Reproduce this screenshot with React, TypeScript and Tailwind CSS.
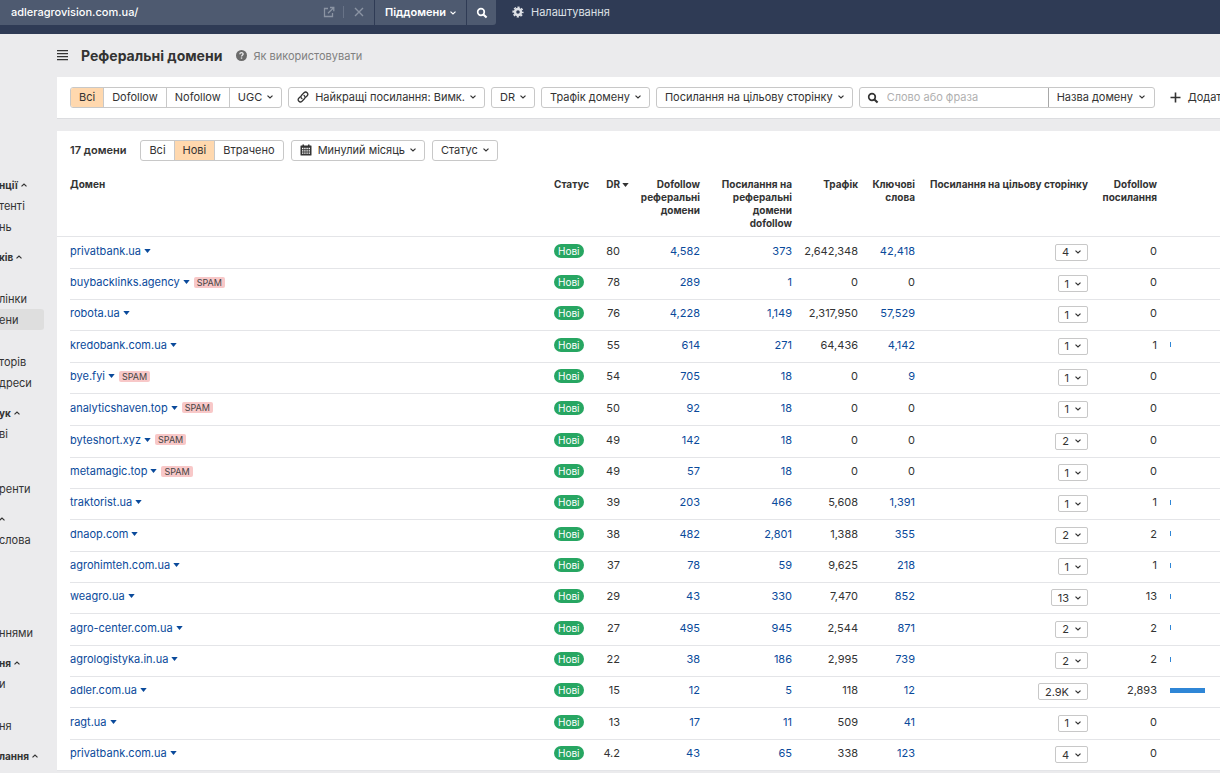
import type { ReactNode } from 'react';

const NAV: { label?: string; head?: boolean; active?: boolean; space?: string }[] = [
  { label: 'нції', head: true },
  { label: 'тенті' },
  { label: 'нь' },
  { space: 'h-[9px]' },
  { label: 'ків', head: true },
  { space: 'h-[21px]' },
  { label: 'лінки' },
  { label: 'ени', active: true },
  { space: 'h-[21px]' },
  { label: 'торів' },
  { label: 'дреси' },
  { space: 'h-[9px]' },
  { label: 'ук', head: true },
  { label: 'ві' },
  { space: 'h-[34px]' },
  { label: 'ренти' },
  { space: 'h-[9px]' },
  { label: '', head: true },
  { label: 'слова' },
  { space: 'h-[72px]' },
  { label: 'ннями' },
  { space: 'h-[9px]' },
  { label: 'ня', head: true },
  { label: 'и' },
  { space: 'h-[21px]' },
  { label: 'ня' },
  { space: 'h-[9px]' },
  { label: 'лання', head: true },
];

type Row = {
  domain: string;
  spam?: boolean;
  dr: string;
  ref: string;
  out: string;
  traffic: string;
  keywords: string;
  links: string;
  dofollow: string;
};

const ROWS: Row[] = [
  { domain: 'privatbank.ua', dr: '80', ref: '4,582', out: '373', traffic: '2,642,348', keywords: '42,418', links: '4', dofollow: '0' },
  { domain: 'buybacklinks.agency', spam: true, dr: '78', ref: '289', out: '1', traffic: '0', keywords: '0', links: '1', dofollow: '0' },
  { domain: 'robota.ua', dr: '76', ref: '4,228', out: '1,149', traffic: '2,317,950', keywords: '57,529', links: '1', dofollow: '0' },
  { domain: 'kredobank.com.ua', dr: '55', ref: '614', out: '271', traffic: '64,436', keywords: '4,142', links: '1', dofollow: '1' },
  { domain: 'bye.fyi', spam: true, dr: '54', ref: '705', out: '18', traffic: '0', keywords: '9', links: '1', dofollow: '0' },
  { domain: 'analyticshaven.top', spam: true, dr: '50', ref: '92', out: '18', traffic: '0', keywords: '0', links: '1', dofollow: '0' },
  { domain: 'byteshort.xyz', spam: true, dr: '49', ref: '142', out: '18', traffic: '0', keywords: '0', links: '2', dofollow: '0' },
  { domain: 'metamagic.top', spam: true, dr: '49', ref: '57', out: '18', traffic: '0', keywords: '0', links: '1', dofollow: '0' },
  { domain: 'traktorist.ua', dr: '39', ref: '203', out: '466', traffic: '5,608', keywords: '1,391', links: '1', dofollow: '1' },
  { domain: 'dnaop.com', dr: '38', ref: '482', out: '2,801', traffic: '1,388', keywords: '355', links: '2', dofollow: '2' },
  { domain: 'agrohimteh.com.ua', dr: '37', ref: '78', out: '59', traffic: '9,625', keywords: '218', links: '1', dofollow: '1' },
  { domain: 'weagro.ua', dr: '29', ref: '43', out: '330', traffic: '7,470', keywords: '852', links: '13', dofollow: '13' },
  { domain: 'agro-center.com.ua', dr: '27', ref: '495', out: '945', traffic: '2,544', keywords: '871', links: '2', dofollow: '2' },
  { domain: 'agrologistyka.in.ua', dr: '22', ref: '38', out: '186', traffic: '2,995', keywords: '739', links: '2', dofollow: '2' },
  { domain: 'adler.com.ua', dr: '15', ref: '12', out: '5', traffic: '118', keywords: '12', links: '2.9K', dofollow: '2,893' },
  { domain: 'ragt.ua', dr: '13', ref: '17', out: '11', traffic: '509', keywords: '41', links: '1', dofollow: '0' },
  { domain: 'privatbank.com.ua', dr: '4.2', ref: '43', out: '65', traffic: '338', keywords: '123', links: '4', dofollow: '0' },
];

function Chevron({ up = false, className = '' }: { up?: boolean; className?: string }) {
  return (
    <svg viewBox="0 0 6 4" className={`h-1 w-[6px] shrink-0 ${className}`} fill="none" stroke="currentColor" strokeWidth="1.2" aria-hidden="true">
      <path d={up ? 'M.5 3.4 3 1l2.5 2.4' : 'M.5.6 3 3 5.5.6'} />
    </svg>
  );
}

function Caret() {
  return (
    <svg viewBox="0 0 7 4" className="h-1 w-[7px] shrink-0" fill="currentColor" aria-hidden="true">
      <path d="M.3 0h6.4L3.5 4z" />
    </svg>
  );
}

function SearchIcon() {
  return (
    <svg viewBox="0 0 12 12" className="size-3 shrink-0" fill="none" stroke="currentColor" strokeWidth="1.7" aria-hidden="true">
      <circle cx="5" cy="5" r="3.3" />
      <path d="m7.4 7.4 3.2 3.2" strokeWidth="2.1" />
    </svg>
  );
}

function Menu({ children }: { children: ReactNode }) {
  return (
    <button type="button" aria-haspopup="menu" className="flex h-[21px] shrink-0 items-center gap-[5px] whitespace-nowrap rounded-[3px] border border-[#c8c8c8] bg-white px-2 pb-px">
      {children}
      <Chevron />
    </button>
  );
}

function Segments({ items, selected, menuLast = false, label }: { items: string[]; selected: string; menuLast?: boolean; label: string }) {
  return (
    <div role="group" aria-label={label} className="flex h-[21px] shrink-0 rounded-[3px] border border-[#c8c8c8]">
      {items.map((item, i) => (
        <button
          key={item}
          type="button"
          aria-pressed={item === selected}
          className={`flex items-center gap-[5px] whitespace-nowrap px-2 pb-px ${i > 0 ? 'border-l border-[#c8c8c8]' : 'rounded-l-[2px]'} ${item === selected ? 'bg-[#ffd8ae]' : ''}`}
        >
          {item}
          {menuLast && i === items.length - 1 && <Chevron />}
        </button>
      ))}
    </div>
  );
}

function Amount({ value }: { value: string }) {
  return value === '0' ? <span>{value}</span> : <a href="#" className="text-[#0a4a9b]">{value}</a>;
}

export default function App() {
  return (
    <div className="min-h-screen overflow-hidden bg-[#ebebed] font-['Inter','Noto_Sans',sans-serif] text-[11px] leading-4 text-[#333]">
      <header className="flex h-[34px] items-start bg-[#2f3b55] text-white">
        <form className="flex h-[25px] w-[496px] gap-px" onSubmit={(e) => e.preventDefault()}>
          <div className="flex min-w-0 flex-1 items-center bg-[#4e5a70] pb-px text-[#8b94a3]">
            <input aria-label="Домен" defaultValue="adleragrovision.com.ua/" className="min-w-0 flex-1 bg-transparent pl-[11px] font-medium text-white outline-none" />
            <button type="button" aria-label="Відкрити сайт" className="px-2">
              <svg viewBox="0 0 12 12" className="size-3" fill="none" stroke="currentColor" strokeWidth="1.3" aria-hidden="true">
                <path d="M5 2.5H1.5v8h8V7M7 1.5h3.8v3.8M10.6 1.7 5 7.2" />
              </svg>
            </button>
            <span className="h-3 w-px bg-[#687387]" />
            <button type="button" aria-label="Очистити" className="px-[10px]">
              <svg viewBox="0 0 10 10" className="size-[10px]" fill="none" stroke="currentColor" strokeWidth="1.4" aria-hidden="true">
                <path d="m1 1 8 8M9 1 1 9" />
              </svg>
            </button>
          </div>
          <div className="relative flex bg-[#4e5a70]">
            <select aria-label="Режим" className="appearance-none bg-transparent pb-px pl-[10px] pr-5 font-semibold outline-none">
              <option>Піддомени</option>
            </select>
            <Chevron className="pointer-events-none absolute right-[10px] top-[11px]" />
          </div>
          <button type="submit" aria-label="Пошук" className="flex w-[29px] items-center justify-center rounded-br-[3px] bg-[#4e5a70]">
            <SearchIcon />
          </button>
        </form>
        <button type="button" className="ml-4 flex h-[25px] items-center gap-[7px] pb-px text-[#dde0e6]">
          <svg viewBox="0 0 12 12" className="size-3" fill="none" stroke="currentColor" aria-hidden="true">
            <circle cx="6" cy="6" r="3" strokeWidth="2.4" />
            <circle cx="6" cy="6" r="4.8" strokeWidth="1.6" strokeDasharray="2.2 1.57" strokeDashoffset="1.1" />
          </svg>
          Налаштування
        </button>
      </header>

      <div className="flex">
        <nav aria-label="Розділи" className="mr-[13px] w-[44px] shrink-0 overflow-hidden pt-[140px]">
          {NAV.map((item, i) =>
            item.space ? (
              <div key={i} className={item.space} />
            ) : item.head ? (
              <button key={i} type="button" aria-label={item.label || 'Розділ'} className="-ml-px flex h-[21px] items-center gap-[3px] text-[10px] font-bold">
                {item.label}
                <Chevron up />
              </button>
            ) : (
              <a key={i} href="#" className={`flex h-[21px] items-center rounded-r-[3px] ${item.active ? 'bg-[#dedede]' : ''}`}>
                <span className="-ml-px">{item.label}</span>
              </a>
            ),
          )}
        </nav>

        <main className="min-w-0 flex-1">
          <div className="flex h-[43px] items-center">
            <button type="button" aria-label="Меню">
              <svg viewBox="0 0 11 11" className="size-[11px]" fill="currentColor" aria-hidden="true">
                <path d="M0 0h11v1.3H0zM0 3h11v1.3H0zM0 6h11v1.3H0zM0 9h11v1.3H0z" />
              </svg>
            </button>
            <h1 className="ml-[13px] text-[14px] font-bold">Реферальні домени</h1>
            <a href="#" className="ml-[14px] flex items-center gap-[6px] text-[#808080]">
              <svg viewBox="0 0 11 11" className="size-[11px]" aria-hidden="true">
                <circle cx="5.5" cy="5.5" r="5.5" fill="#6b6b6b" />
                <path d="M3.8 4.3C3.9 2.1 7.2 2.2 7.1 4.1 7 5.2 5.5 5.2 5.5 6.5" fill="none" stroke="#ebebed" strokeWidth="1.3" />
                <path d="M4.8 7.4h1.4v1.3H4.8z" fill="#ebebed" />
              </svg>
              Як використовувати
            </a>
          </div>

          <section aria-label="Фільтри" className="flex items-center gap-[6px] border-b border-[#dcdde0] bg-white pb-[10px] pl-[13px] pt-[10px]">
            <Segments label="Тип посилань" items={['Всі', 'Dofollow', 'Nofollow', 'UGC']} selected="Всі" menuLast />
            <Menu>
              <svg viewBox="0 0 12 12" className="size-3 shrink-0" fill="none" stroke="currentColor" strokeWidth="1.3" strokeLinecap="round" aria-hidden="true">
                <path d="M4.9 7.6C3.7 6.7 3.6 5.2 4.6 4.2L7 1.8c2.2-2 5 .8 3.2 3L8.6 6.4" />
                <path d="M7.1 4.4c1.2.9 1.3 2.4.3 3.4L5 10.2c-2.2 2-5-.8-3.2-3l1.6-1.6" />
              </svg>
              <span className="ml-px">Найкращі посилання: Вимк.</span>
            </Menu>
            <Menu>DR</Menu>
            <Menu>Трафік домену</Menu>
            <Menu>Посилання на цільову сторінку</Menu>
            <div className="flex h-[21px] shrink-0 rounded-[3px] border border-[#c8c8c8]">
              <label className="flex w-[189px] items-center gap-2 border-r border-[#a8a8a8] pl-[7px]">
                <SearchIcon />
                <input aria-label="Пошук" placeholder="Слово або фраза" className="min-w-0 flex-1 pb-px outline-none placeholder:text-[#b0b0b0]" />
              </label>
              <div className="relative flex">
                <select aria-label="Область пошуку" className="appearance-none bg-transparent pb-px pl-2 pr-5 outline-none">
                  <option>Назва домену</option>
                </select>
                <Chevron className="pointer-events-none absolute right-[9px] top-[7px]" />
              </div>
            </div>
            <button type="button" className="ml-[9px] flex shrink-0 items-center gap-[7px] whitespace-nowrap pb-px">
              <svg viewBox="0 0 11 11" className="size-[11px]" stroke="currentColor" strokeWidth="1.6" aria-hidden="true">
                <path d="M5.5.5v10M.5 5.5h10" />
              </svg>
              Додати
            </button>
          </section>

          <section aria-label="Домени" className="mt-3 bg-white pt-[9px]">
            <div className="flex items-center gap-[7px] pl-[13px]">
              <h2 className="mr-[7px] pb-px font-semibold">17 домени</h2>
              <Segments label="Зміни" items={['Всі', 'Нові', 'Втрачено']} selected="Нові" />
              <Menu>
                <svg viewBox="0 0 12 12" className="size-3 shrink-0" aria-hidden="true">
                  <path d="M1 1.5h1.5V.5H4v1h4v-1h1.5v1H11q.5 0 .5.5v9q0 .5-.5.5H1q-.5 0-.5-.5V2q0-.5.5-.5z" fill="currentColor" />
                  <path d="M2 4.5h8M2 6.8h8M2 9.2h8" stroke="#fff" strokeWidth="1.3" strokeDasharray="1.4 .8" />
                </svg>
                <span className="ml-px">Минулий місяць</span>
              </Menu>
              <Menu>Статус</Menu>
            </div>

            <table className="mt-[11px] w-full table-fixed border-separate border-spacing-0 whitespace-nowrap">
              <colgroup>
                <col className="w-[13px]" />
                <col />
                <col className="w-[42px]" />
                <col className="w-[33px]" />
                <col className="w-[71px]" />
                <col className="w-[92px]" />
                <col className="w-[66px]" />
                <col className="w-[57px]" />
                <col className="w-[173px]" />
                <col className="w-[69px]" />
                <col className="w-[63px]" />
              </colgroup>
              <thead>
                <tr className="text-right text-[10px] leading-[13px] [&>*]:h-[65px] [&>*]:border-b [&>*]:border-[#e4e5e8] [&>*]:pt-[6px] [&>*]:align-top [&>*]:font-bold">
                  <td />
                  <th className="text-left">Домен</th>
                  <th className="text-left">Статус</th>
                  <th>
                    <span className="inline-flex items-center gap-[2px]">DR <Caret /></span>
                  </th>
                  <th>Dofollow<br />реферальні<br />домени</th>
                  <th>Посилання на<br />реферальні<br />домени<br />dofollow</th>
                  <th>Трафік</th>
                  <th>Ключові<br />слова</th>
                  <th>Посилання на цільову сторінку</th>
                  <th>Dofollow<br />посилання</th>
                  <td />
                </tr>
              </thead>
              <tbody>
                {ROWS.map((r) => {
                  const count = Number(r.dofollow.replace(',', ''));
                  return (
                    <tr
                      key={r.domain}
                      className="h-[31px] text-right nth-6:h-[32px] nth-[3n+1]:h-[32px] [&>td]:border-[#e4e5e8] [&>td]:pb-1 [&>td:not(:first-child)]:border-b last:[&>td]:border-b"
                    >
                      <td />
                      <td>
                        <div className="flex items-center gap-[3px] text-[#0a4a9b]">
                          <a href="#">{r.domain}</a>
                          <Caret />
                          {r.spam && <span className="ml-px rounded-[2px] bg-[#f8c8c8] px-[3px] text-[9px] leading-[11px] text-[#444]">SPAM</span>}
                        </div>
                      </td>
                      <td className="text-left">
                        <span className="inline-block rounded-full bg-[#27a662] px-1 text-[10px] leading-[14px] text-white">Нові</span>
                      </td>
                      <td className="pr-[9px]">{r.dr}</td>
                      <td><Amount value={r.ref} /></td>
                      <td><Amount value={r.out} /></td>
                      <td>{r.traffic}</td>
                      <td><Amount value={r.keywords} /></td>
                      <td>
                        <div className="flex justify-end pt-[3px]">
                          <button type="button" aria-haspopup="menu" className="flex h-[17px] items-center gap-[6px] rounded-[2px] border border-[#c8c8c8] px-[6px]">
                            {r.links}
                            <Chevron />
                          </button>
                        </div>
                      </td>
                      <td>{r.dofollow}</td>
                      <td>
                        {count > 0 && (
                          <div className="ml-[13px] h-[5px] min-w-px bg-[#2f86d6]" style={{ width: Math.round((count / 2893) * 35) }} />
                        )}
                      </td>
                    </tr>
                  );
                })}
              </tbody>
            </table>
          </section>
        </main>
      </div>
    </div>
  );
}
